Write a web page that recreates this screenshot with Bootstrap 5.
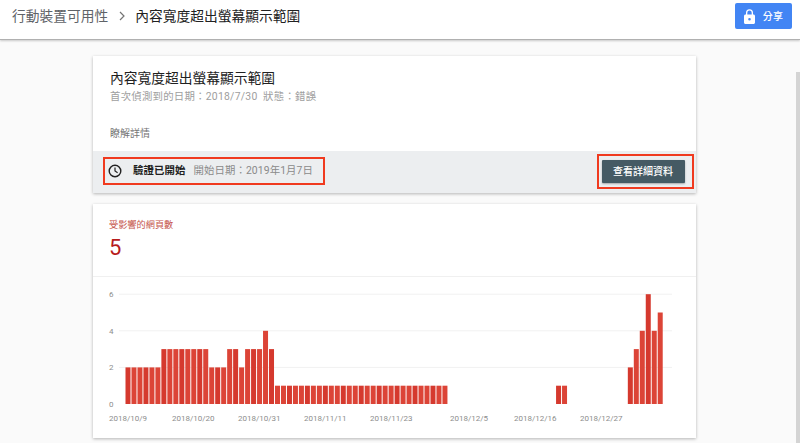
<!DOCTYPE html>
<html lang="zh-Hant">
<head>
  <meta charset="UTF-8" />
  <title>內容寬度超出螢幕顯示範圍</title>
  <link href="https://cdn.jsdelivr.net/npm/bootstrap@5.3.0/dist/css/bootstrap.min.css" rel="stylesheet">
  <style>
    body {
      background: #fafafa;
      font-family: "Roboto", "Noto Sans CJK TC", sans-serif;
      height: 443px;
      overflow: hidden;
    }
    .top-bar {
      height: 40px;
      background: #fff;
      border-bottom: 1px solid #b0b0b0;
      box-shadow: 0 1px 2px rgba(0, 0, 0, .2);
      padding: 0 8px 7px 12px;
      font-size: 13.75px;
      color: #212121;
    }
    .crumb-root { color: #5f6368; }
    .crumb-sep { margin: 0 10px 0 11px; }
    .share-btn {
      width: 57px;
      height: 26px;
      background: #4285f4;
      color: #fff;
      font-size: 10px;
      font-weight: 500;
      letter-spacing: .2px;
      border-radius: 2px;
    }
    .page-wrap { width: 603px; margin: 16px 0 0 93px; }
    .info-card, .chart-card {
      background: #fff;
      box-shadow: 0 1px 3px rgba(0, 0, 0, .28);
    }
    .info-body { height: 95px; padding: 13px 17px 0; }
    .info-title { font-size: 13.75px; line-height: 18px; color: #212121; }
    .info-sub { font-size: 10.4px; line-height: 14px; letter-spacing: .25px; color: #9e9e9e; margin-top: 3px; }
    .info-link { font-size: 10px; line-height: 14px; color: #757575; margin-top: 23px; }
    .info-foot {
      height: 42px;
      background: #eceef0;
      padding: 0 2px 2px 10px;
    }
    .mark-box { border: 2.5px solid #f03a1f; }
    .status-box { width: 222px; height: 28px; padding-left: 3px; font-size: 10.4px; letter-spacing: .1px; }
    .status-name { color: #212121; font-weight: 700; margin-left: 11px; }
    .status-date { color: #8a8a8a; margin-left: 8px; }
    .detail-box { width: 97px; height: 35px; padding: 4px 6.500px 2.500px 2.500px; }
    .detail-btn {
      width: 83px;
      height: 23px;
      background: #455a64;
      color: #fff;
      font-size: 10px;
      font-weight: 500;
      border-radius: 1px;
      box-shadow: 0 1px 2px rgba(0, 0, 0, .3);
    }
    .chart-card { margin-top: 11px; height: 234px; }
    .chart-head { height: 73px; padding: 14px 16px 0; border-bottom: 1px solid #f0f0f0; }
    .chart-label { font-size: 9.2px; line-height: 13px; color: #c5544b; }
    .chart-num { font-size: 22px; line-height: 26px; color: #b71c1c; margin-top: 4px; }
    .chart-svg { display: block; }
    .chart-svg text { font-size: 8px; fill: #8d8d8d; font-family: "Roboto", sans-serif; }
    .scroll-strip {
      position: absolute;
      top: 72px;
      right: 0;
      width: 4px;
      height: 371px;
      background: #d4d4d4;
    }
  </style>
</head>
<body>
  <div class="top-bar d-flex align-items-center justify-content-between">
    <div class="d-flex align-items-center">
      <span class="crumb-root">行動裝置可用性</span>
      <svg class="crumb-sep" width="6" height="10" viewBox="0 0 6 10"><path d="M1 1l4 4-4 4" fill="none" stroke="#757575" stroke-width="1.2"/></svg>
      <span>內容寬度超出螢幕顯示範圍</span>
    </div>
    <div class="share-btn d-flex align-items-center justify-content-center gap-2">
      <svg width="11" height="15" viewBox="0 0 11 15"><path fill="#fff" fill-rule="evenodd" d="M9.500 5.500H9V3.700a3.500 3.500 0 0 0-7 0v1.800h-.5C.7 5.500 0 6.200 0 7v6.500C0 14.300.7 15 1.500 15h8c.8 0 1.500-.7 1.500-1.500V7c0-.8-.7-1.500-1.500-1.500zM5.500 11.600a1.300 1.300 0 1 1 0-2.600 1.300 1.300 0 0 1 0 2.600zM7.700 5.500H3.300V3.700a2.200 2.200 0 0 1 4.400 0v1.800z"/></svg>
      <span>分享</span>
    </div>
  </div>

  <div class="page-wrap">
    <div class="info-card">
      <div class="info-body">
        <div class="info-title">內容寬度超出螢幕顯示範圍</div>
        <div class="info-sub">首次偵測到的日期：2018/7/30&nbsp; 狀態：錯誤</div>
        <div class="info-link">瞭解詳情</div>
      </div>
      <div class="info-foot d-flex align-items-center justify-content-between">
        <div class="mark-box status-box d-flex align-items-center">
          <svg width="14" height="14" viewBox="0 0 14 14"><circle cx="7" cy="7" r="5.800" fill="none" stroke="#212121" stroke-width="1.400"/><path d="M7 3.500V7l2.600 1.700" fill="none" stroke="#212121" stroke-width="1.200"/></svg>
          <span class="status-name">驗證已開始</span>
          <span class="status-date">開始日期：2019年1月7日</span>
        </div>
        <div class="mark-box detail-box d-flex align-items-start">
          <div class="detail-btn d-flex align-items-center justify-content-center">查看詳細資料</div>
        </div>
      </div>
    </div>

    <div class="chart-card">
      <div class="chart-head">
        <div class="chart-label">受影響的網頁數</div>
        <div class="chart-num">5</div>
      </div>
      <svg id="chart" class="chart-svg" width="603" height="160"></svg>
    </div>
  </div>
  <div class="scroll-strip"></div>

  <script>
    // svg sits at page x 93, y 277
    const values = [2,2,2,2,2,2, 3,3,3,3,3,3,3,3, 2,2,2, 3,3, 2, 3,3,3, 4, 3];
    for (let i = 0; i < 29; i++) values.push(1);
    const extra = { 72: 1, 73: 1, 84: 2, 85: 3, 86: 4, 87: 6, 88: 4, 89: 5 };
    const base = 127, unit = 18.3;
    let html = '';

    [2, 4, 6].forEach(v => {
      const y = base - v * unit;
      html += `<line x1="26" x2="579" y1="${y}" y2="${y}" stroke="#f1f1f1"/>`;
    });
    [0, 2, 4, 6].forEach(v => {
      html += `<text x="16" y="${base - v * unit + 3}">${v}</text>`;
    });

    function bar(i, v) {
      const h = v * unit;
      const x = 32.5 + i * 5.98;
      const shade = i % 3 === 0 ? '#d5392e' : '#dc4437';
      return `<rect x="${x}" y="${base - h}" width="5" height="${h}" fill="${shade}"/>`;
    }
    values.forEach((v, i) => { html += bar(i, v); });
    Object.keys(extra).forEach(i => { html += bar(+i, extra[i]); });

    const labels = [[16, '2018/10/9'], [79, '2018/10/20'], [145, '2018/10/31'], [211, '2018/11/11'], [277, '2018/11/23'], [357, '2018/12/5'], [421, '2018/12/16'], [487, '2018/12/27']];
    labels.forEach(l => {
      html += `<text x="${l[0]}" y="144">${l[1]}</text>`;
    });
    document.getElementById('chart').innerHTML = html;
  </script>
  <script src="https://cdn.jsdelivr.net/npm/bootstrap@5.3.0/dist/js/bootstrap.bundle.min.js"></script>
</body>
</html>
